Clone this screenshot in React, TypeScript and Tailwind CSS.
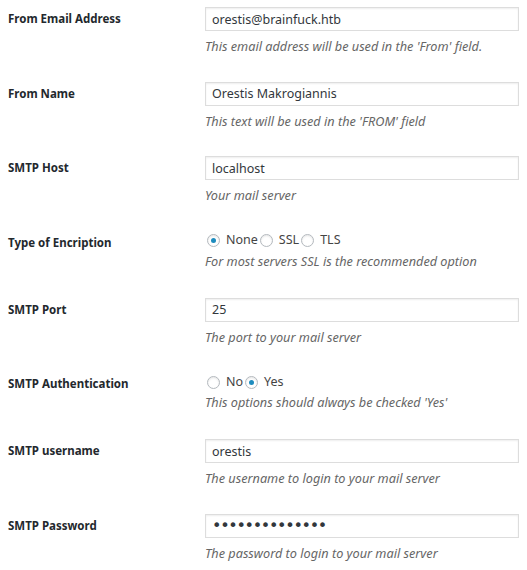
import React from "react";

/* WordPress-style SMTP settings table */

const font = { fontFamily: '"Noto Sans", "Open Sans", sans-serif' };

function Label({ children }: { children: React.ReactNode }) {
  return (
    <div className="w-[205px] shrink-0 pt-[3px] pl-2 text-[11.5px] font-bold leading-[18px] text-[#23282d]">
      {children}
    </div>
  );
}

function Desc({ children }: { children: React.ReactNode }) {
  return <p className="text-[12.7px] italic leading-[20px] text-[#666]">{children}</p>;
}

function TextRow({ label, value, desc, type = "text" }: { label: string; value: string; desc: string; type?: string }) {
  const pw = type === "password";
  return (
    <div className="flex pt-[7px] pb-[18.5px]">
      <Label>{label}</Label>
      <div className="flex flex-col">
        <input
          type={type}
          readOnly
          value={value}
          className={`h-[24px] w-[314px] border border-[#dddddd] bg-white px-[6px] text-[#32373c] shadow-[inset_0_1px_2px_rgba(0,0,0,0.07)] outline-none ${
            pw ? "text-[16px] tracking-[-1.3px]" : "text-[12.5px]"
          }`}
          style={pw ? { fontFamily: '"DejaVu Sans", sans-serif' } : font}
        />
        <div className="mt-[5px]">
          <Desc>{desc}</Desc>
        </div>
      </div>
    </div>
  );
}

function Radio({ checked }: { checked?: boolean }) {
  return (
    <span className="mr-[6px] inline-flex h-[13px] w-[13px] shrink-0 items-center justify-center rounded-full border border-[#b4b9be] bg-white shadow-[inset_0_1px_2px_rgba(0,0,0,0.1)]">
      {checked && <span className="h-[5px] w-[5px] rounded-full bg-[#1e8cbe]" />}
    </span>
  );
}

function RadioRow({ label, options, selected, desc }: { label: string; options: string[]; selected: string; desc: string }) {
  return (
    <div className="flex pt-[7px] pb-[20px]">
      <Label>{label}</Label>
      <div className="flex flex-col">
        <div className="flex h-[20px] items-center pl-[2px] text-[12.5px] text-[#444]">
          {options.map((o) => (
            <label key={o} className="mr-[2px] flex items-center">
              <Radio checked={o === selected} />
              {o}
            </label>
          ))}
        </div>
        <Desc>{desc}</Desc>
      </div>
    </div>
  );
}

export default function App() {
  return (
    <div className="min-h-[570px] w-[527px] bg-white" style={font}>
      <TextRow
        label="From Email Address"
        value="orestis@brainfuck.htb"
        desc="This email address will be used in the 'From' field."
      />
      <TextRow label="From Name" value="Orestis Makrogiannis" desc="This text will be used in the 'FROM' field" />
      <TextRow label="SMTP Host" value="localhost" desc="Your mail server" />
      <RadioRow
        label="Type of Encription"
        options={["None", "SSL", "TLS"]}
        selected="None"
        desc="For most servers SSL is the recommended option"
      />
      <TextRow label="SMTP Port" value="25" desc="The port to your mail server" />
      <RadioRow
        label="SMTP Authentication"
        options={["No", "Yes"]}
        selected="Yes"
        desc="This options should always be checked 'Yes'"
      />
      <TextRow label="SMTP username" value="orestis" desc="The username to login to your mail server" />
      <TextRow
        label="SMTP Password"
        value="kHGuERB29DNiNE"
        type="password"
        desc="The password to login to your mail server"
      />
    </div>
  );
}
